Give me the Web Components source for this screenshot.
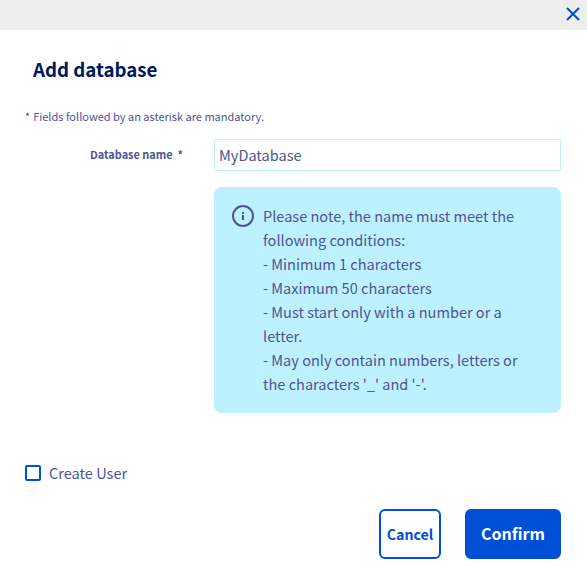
<!DOCTYPE html>
<html lang="en">
<head>
<meta charset="utf-8">
<title>Add database</title>
<style>
  body { margin: 0; background: #fff; color: #4d5592; font-family: "Noto Sans CJK SC", "Noto Sans", sans-serif; font-size: 14.55px; }
</style>
</head>
<body>
<database-dialog></database-dialog>
<script>
const define = (name, markup) => {
  const template = document.createElement('template');
  template.innerHTML = '<style>*{box-sizing:border-box}:host{box-sizing:border-box}</style>' + markup;
  customElements.define(name, class extends HTMLElement {
    constructor() {
      super();
      this.attachShadow({ mode: 'open' }).append(template.content.cloneNode(true));
    }
  });
};

define('dialog-bar', `
  <style>
    :host { display: flex; justify-content: flex-end; height: 30px; padding: 7px 7px 0 0; background: #eceeec; }
    button { display: block; width: 14px; height: 14px; padding: 0; border: 0; background: none; }
    svg { display: block; }
  </style>
  <button aria-label="Close"><svg width="14" height="14" viewBox="0 0 14 14"><path d="M1 1L13 13M13 1L1 13" stroke="#0050d7" stroke-width="2.1"/></svg></button>`);

define('mandatory-note', `
  <style>
    :host { display: flex; gap: 3px; margin: 23px 25px 0; height: 20px; line-height: 20px; font-size: 11px; }
    i { font-style: normal; color: #c11b2b; }
  </style>
  <i>*</i><span><slot></slot></span>`);

define('form-row', `
  <style>
    :host { display: grid; grid-template-columns: 189px 347px; margin: 13px 0 0 25px; }
    label { justify-self: end; margin-right: 31px; line-height: 30px; font-size: 10.9px; font-weight: 700; white-space: pre; }
  </style>
  <label><slot name="label"></slot></label><div><slot></slot></div>`);

define('text-field', `
  <style>
    :host { display: block; height: 32px; border: 1px solid #bef1ff; border-radius: 2px; padding: 0 4px; line-height: 30px; }
  </style>
  <slot></slot>`);

define('info-message', `
  <style>
    :host { display: flex; gap: 8px; height: 226px; margin-top: 16px; padding: 17px 30px 0 18px; border-radius: 8px; background: #bef1ff; line-height: 24px; }
    svg { flex: none; margin-top: 1px; }
    div { white-space: pre; }
  </style>
  <svg width="23" height="23" viewBox="0 0 23 23"><circle cx="11" cy="11" r="10" fill="none" stroke="#4d5592" stroke-width="2"/><path d="M10 7h2v2h-2zM10 10h2v5h-2z" fill="#4d5592"/></svg>
  <div><slot></slot></div>`);

define('check-option', `
  <style>
    :host { display: flex; align-items: flex-start; gap: 8px; height: 24px; margin: 48px 0 0 25px; line-height: 24px; }
    span { width: 16px; height: 16px; margin-top: 4px; border: 2px solid #0050d7; border-radius: 2px; }
  </style>
  <span></span><slot></slot>`);

define('action-button', `
  <style>
    :host { display: block; height: 50px; width: 62px; }
    button { display: block; width: 100%; height: 100%; padding: 0; border: 2px solid #0050d7; border-radius: 6px; background: #fff; color: #0050d7; font: 700 14.2px/46px "Noto Sans CJK SC", "Noto Sans", sans-serif; }
    :host([primary]) { width: 96px; }
    :host([primary]) button { padding-bottom: 2px; background: #0050d7; color: #fff; font-size: 16px; line-height: 44px; }
  </style>
  <button><slot></slot></button>`);

define('database-dialog', `
  <style>
    :host { display: block; width: 587px; height: 567px; overflow: hidden; }
    h1 { margin: 25px 0 0 33px; height: 28px; font-size: 18.7px; line-height: 28px; font-weight: 700; color: #00185e; }
    footer { display: flex; justify-content: flex-end; gap: 24px; padding: 24px 26px 0 0; }
  </style>
  <dialog-bar></dialog-bar>
  <h1>Add database</h1>
  <mandatory-note>Fields followed by an asterisk are mandatory.</mandatory-note>
  <form-row>
    <span slot="label">Database name  *</span>
    <text-field>MyDatabase</text-field>
    <info-message>Please note, the name must meet the
following conditions:
- Minimum 1 characters
- Maximum 50 characters
- Must start only with a number or a
letter.
- May only contain numbers, letters or
the characters '_' and '-'.</info-message>
  </form-row>
  <check-option>Create User</check-option>
  <footer><action-button>Cancel</action-button><action-button primary>Confirm</action-button></footer>`);
</script>
</body>
</html>
